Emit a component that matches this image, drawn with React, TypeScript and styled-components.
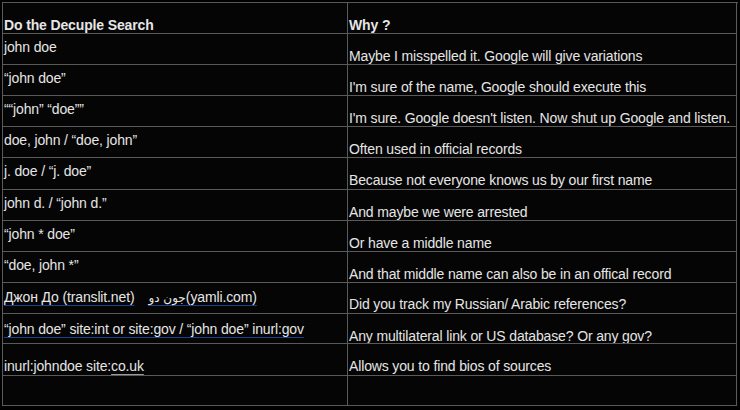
import React from "react";
import styled, { createGlobalStyle } from "styled-components";

const Global = createGlobalStyle`
  html, body { margin: 0; padding: 0; background: #000; }
  body { width: 740px; height: 410px; overflow: hidden; }
`;

const Page = styled.div`
  width: 740px;
  height: 410px;
  background: #000;
  padding: 2px 0 0 2px;
  box-sizing: border-box;
  font-family: "Liberation Sans", Arial, sans-serif;
  color: #e6e6e6;
`;

const Table = styled.div`
  display: grid;
  grid-template-columns: 345px 389px;
  grid-template-rows: 31px 31px 31px 31px 31px 32px 31px 31px 31px 31px 30px 32px 30px;
  border-top: 1px solid #5a5a5a;
  border-left: 1px solid #5a5a5a;
  width: 735px;
  background: #050505;
`;

const Cell = styled.div<{ $pt: number; $head?: boolean }>`
  border-right: 1px solid #5a5a5a;
  border-bottom: 1px solid #5a5a5a;
  padding: ${(p) => p.$pt}px 0 0 1px;
  font-size: 14px;
  line-height: 16px;
  letter-spacing: -0.14px;
  font-weight: ${(p) => (p.$head ? 700 : 400)};
  white-space: nowrap;
  overflow: hidden;
  box-sizing: border-box;
`;

const Link = styled.span<{ $color: string }>`
  text-decoration: underline;
  text-decoration-color: ${(p) => p.$color};
  text-underline-offset: 3px;
`;

const Arabic = styled.span`
  font-family: "DejaVu Sans", "Noto Sans", sans-serif;
  font-size: 12px;
  margin-left: 14px;
`;

type Row = { left: React.ReactNode; right: string; lp: number; rp: number };

const rows: Row[] = [
  { left: "john doe", right: "Maybe I misspelled it. Google will give variations", lp: 5, rp: 14 },
  { left: "“john doe”", right: "I'm sure of the name, Google should execute this", lp: 5, rp: 14 },
  { left: "““john” “doe””", right: "I'm sure. Google doesn't listen. Now shut up Google and listen.", lp: 5, rp: 14 },
  { left: "doe, john / “doe, john”", right: "Often used in official records", lp: 5, rp: 14 },
  { left: "j. doe / “j. doe”", right: "Because not everyone knows us by our first name", lp: 5, rp: 14 },
  { left: "john d. / “john d.”", right: "And maybe we were arrested", lp: 5, rp: 14 },
  { left: "“john * doe”", right: "Or have a middle name", lp: 5, rp: 14 },
  { left: "“doe, john *”", right: "And that middle name can also be in an offical record", lp: 5, rp: 14 },
  {
    left: (
      <Link $color="#1d3f8f">
        Джон До (translit.net)<Arabic>جون دو</Arabic>(yamli.com)
      </Link>
    ),
    right: "Did you track my Russian/ Arabic references?",
    lp: 6,
    rp: 13,
  },
  {
    left: <Link $color="#1d3f8f">“john doe” site:int or site:gov / “john doe” inurl:gov</Link>,
    right: "Any multilateral link or US database? Or any gov?",
    lp: 7,
    rp: 14,
  },
  {
    left: (
      <>
        inurl:johndoe site:<Link $color="#9a9a9a">co.uk</Link>
      </>
    ),
    right: "Allows you to find bios of sources",
    lp: 14,
    rp: 14,
  },
  { left: "", right: "", lp: 0, rp: 0 },
];

export default function App() {
  return (
    <Page>
      <Global />
      <Table>
        <Cell $pt={14} $head>
          Do the Decuple Search
        </Cell>
        <Cell $pt={14} $head>
          Why ?
        </Cell>
        {rows.map((r, i) => (
          <React.Fragment key={i}>
            <Cell $pt={r.lp}>{r.left}</Cell>
            <Cell $pt={r.rp}>{r.right}</Cell>
          </React.Fragment>
        ))}
      </Table>
    </Page>
  );
}
